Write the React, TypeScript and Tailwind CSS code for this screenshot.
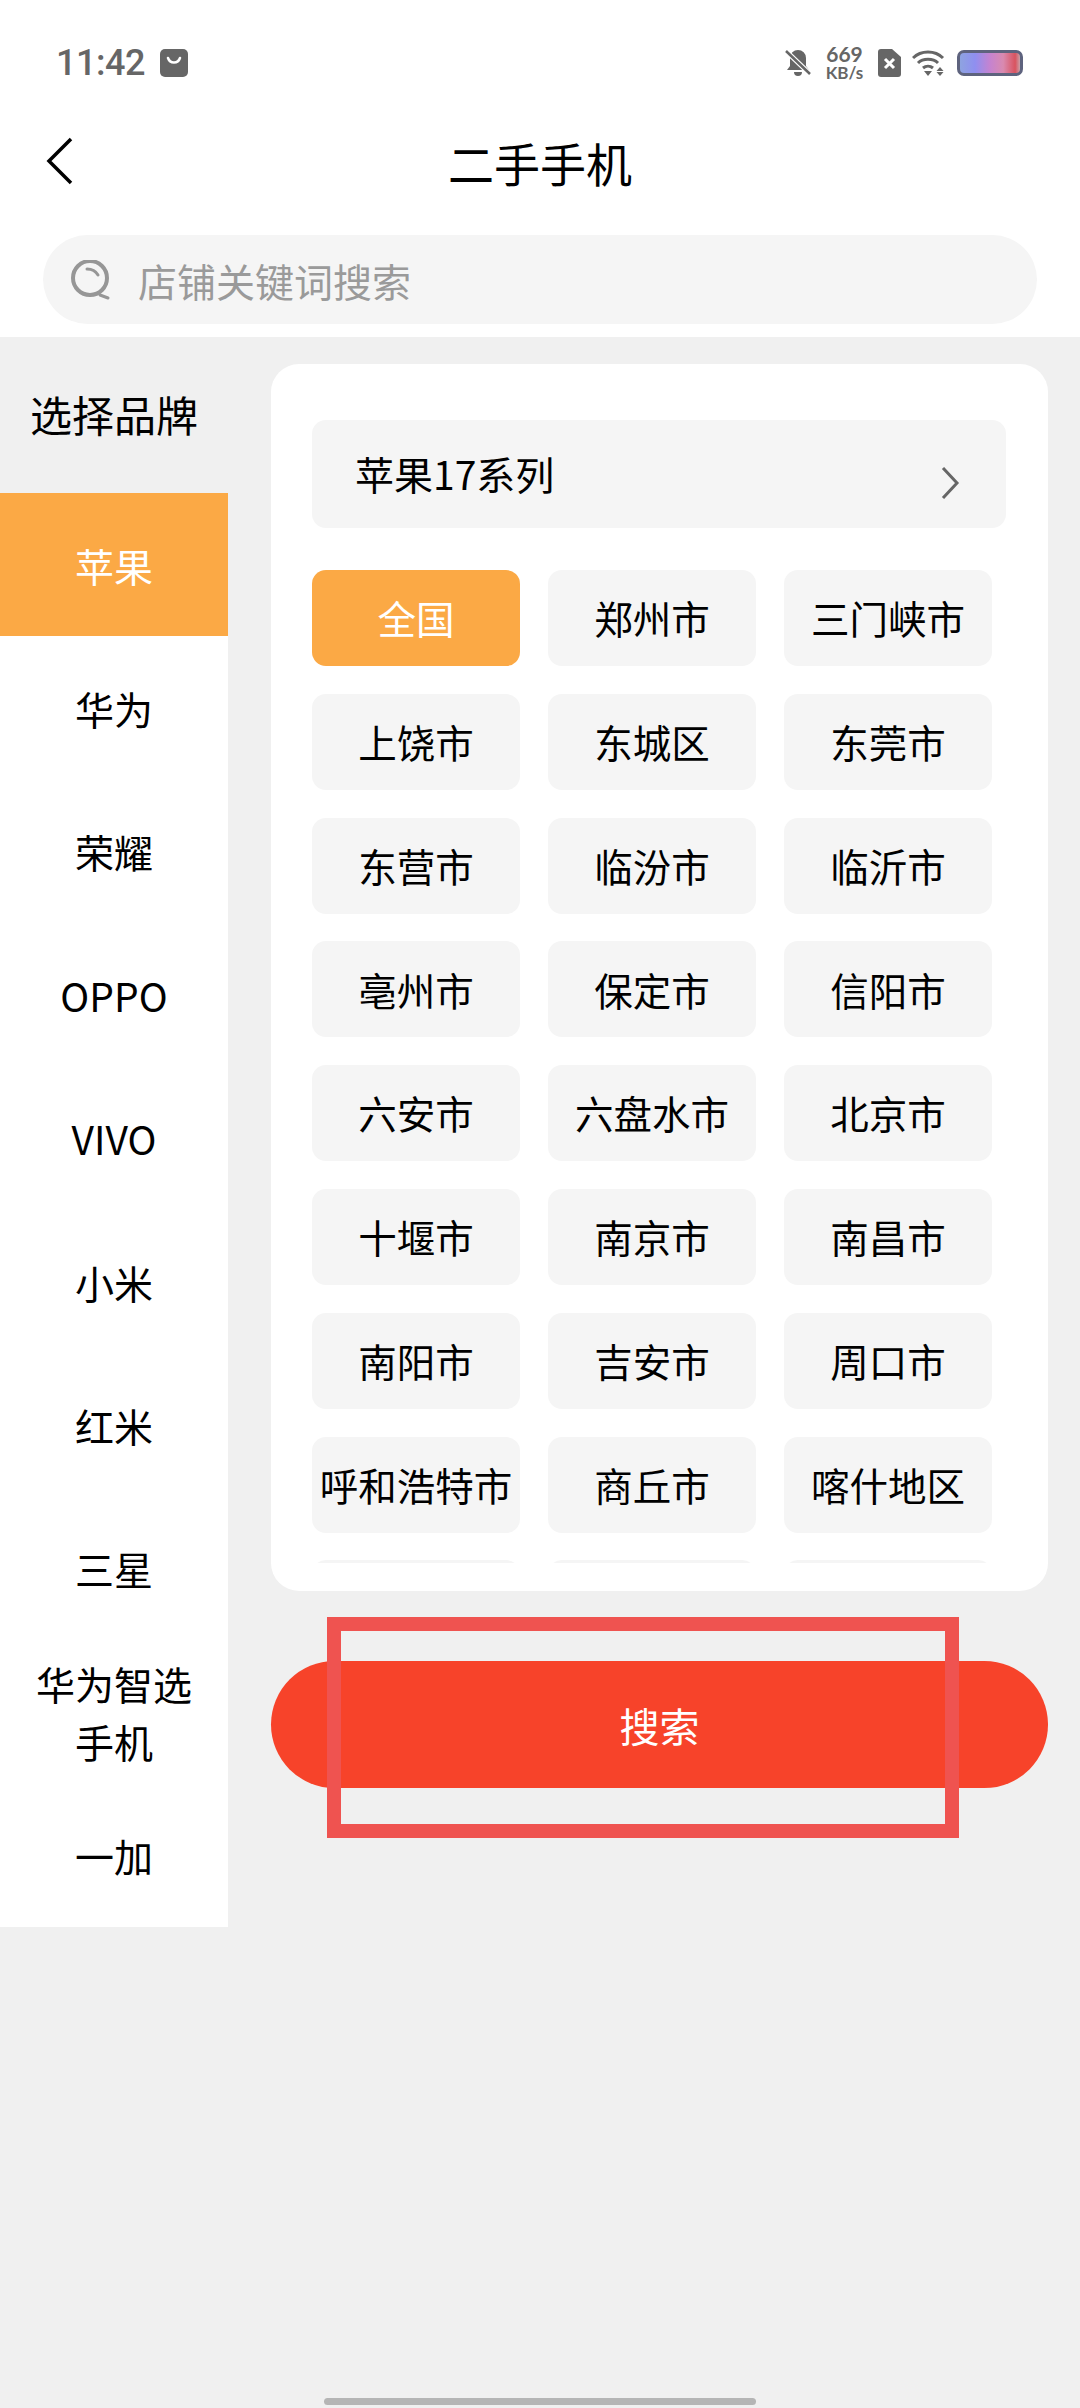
import React from 'react';

const BRANDS = ['苹果', '华为', '荣耀', 'OPPO', 'VIVO', '小米', '红米', '三星', '华为智选手机', '一加'];

const CITIES = [
  '全国', '郑州市', '三门峡市',
  '上饶市', '东城区', '东莞市',
  '东营市', '临汾市', '临沂市',
  '亳州市', '保定市', '信阳市',
  '六安市', '六盘水市', '北京市',
  '十堰市', '南京市', '南昌市',
  '南阳市', '吉安市', '周口市',
  '呼和浩特市', '商丘市', '喀什地区',
];

function StatusBar() {
  return (
    <div className="flex h-[92px] items-end justify-between pl-[56px] pr-[57px] pb-[15px] text-[#666666]">
      <div className="flex items-center gap-[15px]">
        <span className="font-['Roboto',sans-serif] text-[36px] leading-[28px] font-medium tracking-[-0.5px]">11:42</span>
        <svg width="28" height="28" viewBox="0 0 28 28">
          <path d="M5 0h18a5 5 0 0 1 5 5v18a5 5 0 0 1-5 5H5a5 5 0 0 1-5-5V5a5 5 0 0 1 5-5z" fill="#666666" />
          <path d="M8 9c2 6 10 6 12 0" fill="none" stroke="#fff" strokeWidth="2.500" strokeLinecap="round" />
        </svg>
      </div>
      <div className="mb-[-4px] flex items-center">
        <svg width="26" height="28" viewBox="0 0 26 28" className="mr-[15px]">
          <path d="M13 1a8 8 0 0 1 8 8v8l3 4H2l3-4V9a8 8 0 0 1 8-8zM9 23h8a4 4 0 0 1-8 0z" fill="#666666" />
          <path d="M1 2l24 23" stroke="#fff" strokeWidth="5" />
          <path d="M1 2l24 23" stroke="#666666" strokeWidth="2.500" />
        </svg>
        <div className="mr-[15px] flex w-[37px] flex-col items-center gap-[2px] font-['Lato',sans-serif] font-bold">
          <span className="text-[21px] leading-[18px]">669</span>
          <span className="text-[17px] leading-[16px]">KB/s</span>
        </div>
        <svg width="23" height="28" viewBox="0 0 23 28" className="mr-[11px]">
          <path d="M3 0h11l9 8v17a3 3 0 0 1-3 3H3a3 3 0 0 1-3-3V3a3 3 0 0 1 3-3z" fill="#666666" />
          <path d="M7 10l9 9M16 10l-9 9" stroke="#fff" strokeWidth="3" />
        </svg>
        <svg width="34" height="27" viewBox="0 0 34 27" className="mr-[11px]">
          <path d="M1 8c8-8 22-8 30 0M6 13c5-5 15-5 20 0M11 18c3-2.500 7-2.500 10 0" fill="none" stroke="#666666" strokeWidth="3" />
          <path d="M12 21h8l-4 5zM28 17l3.500 4h-7zM24.500 22h7l-3.500 4z" fill="#666666" />
        </svg>
        <div className="h-[26px] w-[66px] rounded-[7px] border-[3px] border-[#5e637e] bg-[linear-gradient(90deg,#8ea3e0_0%,#8f8ff0_25%,#c583d0_50%,#d98ab0_72%,#d9535f_92%,#c9a0a8_100%)]" />
      </div>
    </div>
  );
}

function NavBar() {
  return (
    <div className="relative mt-[37px] flex h-[65px] items-center justify-center">
      <svg width="28" height="48" viewBox="0 0 28 48" className="absolute left-[46px] top-[8px]">
        <path d="M25 2L3 24l22 22" fill="none" stroke="#000" strokeWidth="3.500" />
      </svg>
      <span className="text-[46px] leading-[60px] text-black">二手手机</span>
    </div>
  );
}

function SearchBar() {
  return (
    <div className="mx-[43px] mt-[41px] mb-[13px] flex h-[89px] items-center rounded-[45px] bg-[#f5f5f5] pl-[28px]">
      <svg width="40" height="40" viewBox="0 0 40 40" className="mr-[27px]">
        <circle cx="19" cy="18" r="17" fill="none" stroke="#969696" strokeWidth="4" />
        <path d="M16 9c5 0 9 2.500 11 6M29 35l8 3" fill="none" stroke="#969696" strokeWidth="3" strokeLinecap="round" />
      </svg>
      <span className="text-[39px] leading-[50px] text-[#9a9a9a]">店铺关键词搜索</span>
    </div>
  );
}

function BrandSidebar() {
  return (
    <aside className="w-[228px] shrink-0">
      <div className="flex h-[156px] items-start justify-center pt-[50px] text-[42px] leading-[54px] text-black">选择品牌</div>
      <div className="bg-white">
        {BRANDS.map((brand, i) => (
          <div
            key={brand}
            className={`flex h-[143.4px] items-center justify-center px-[30px] text-center text-[39px] leading-[58px] ${
              i === 0 ? 'bg-[#fba945] text-white' : 'text-black'
            }`}
          >
            {brand}
          </div>
        ))}
      </div>
    </aside>
  );
}

function CityPanel() {
  return (
    <main className="ml-[43px] w-[777px] pt-[27px]">
      <div className="rounded-[28px] bg-white pt-[56px] pb-[28px] pl-[41px]">
        <div className="flex h-[108px] w-[694px] items-center justify-between rounded-[14px] bg-[#f5f5f5] pl-[43px] pr-[46px]">
          <span className="mb-[2px] text-[39px] leading-[50px] text-black">苹果17系列</span>
          <svg width="20" height="32" viewBox="0 0 20 32" className="mt-[17px]">
            <path d="M3 1l14 15L3 31" fill="none" stroke="#666" strokeWidth="3" />
          </svg>
        </div>
        <div className="mt-[42px] h-[993px] overflow-hidden">
          <div className="grid w-[681px] grid-cols-[208px_208px_208px] gap-x-[28px] gap-y-[27.800px]">
            {CITIES.map((city, i) => (
              <div
                key={city}
                className={`flex h-[96px] items-center justify-center rounded-[14px] text-[38.500px] whitespace-nowrap ${
                  i === 0 ? 'bg-[#fba945] text-white' : 'bg-[#f5f5f5] text-black'
                }`}
              >
                {city}
              </div>
            ))}
            {/* next row is scrolled away, only its top edge shows */}
            <div className="h-[96px] rounded-[14px] bg-[#f5f5f5]" />
            <div className="h-[96px] rounded-[14px] bg-[#f5f5f5]" />
            <div className="h-[96px] rounded-[14px] bg-[#f5f5f5]" />
          </div>
        </div>
      </div>
      <button
        type="button"
        className="relative mt-[70px] flex h-[127px] w-full items-center justify-center rounded-full bg-[#f7432a] text-[40px] text-white"
      >
        搜索
        {/* red highlight box drawn over the screenshot */}
        <span className="absolute left-[56px] top-[-44px] h-[221px] w-[632px] border-[14px] border-[#ef5350]" />
      </button>
    </main>
  );
}

export default function App() {
  return (
    <div className="relative flex h-[2408px] w-[1080px] flex-col overflow-hidden bg-[#f0f0f0] font-['Noto_Sans_CJK_SC','Noto_Sans',sans-serif]">
      <header className="bg-white">
        <StatusBar />
        <NavBar />
        <SearchBar />
      </header>
      <div className="flex">
        <BrandSidebar />
        <CityPanel />
      </div>
      <div className="absolute bottom-[3px] left-[324px] h-[7px] w-[432px] rounded-full bg-[#b5b5b5]" />
    </div>
  );
}
